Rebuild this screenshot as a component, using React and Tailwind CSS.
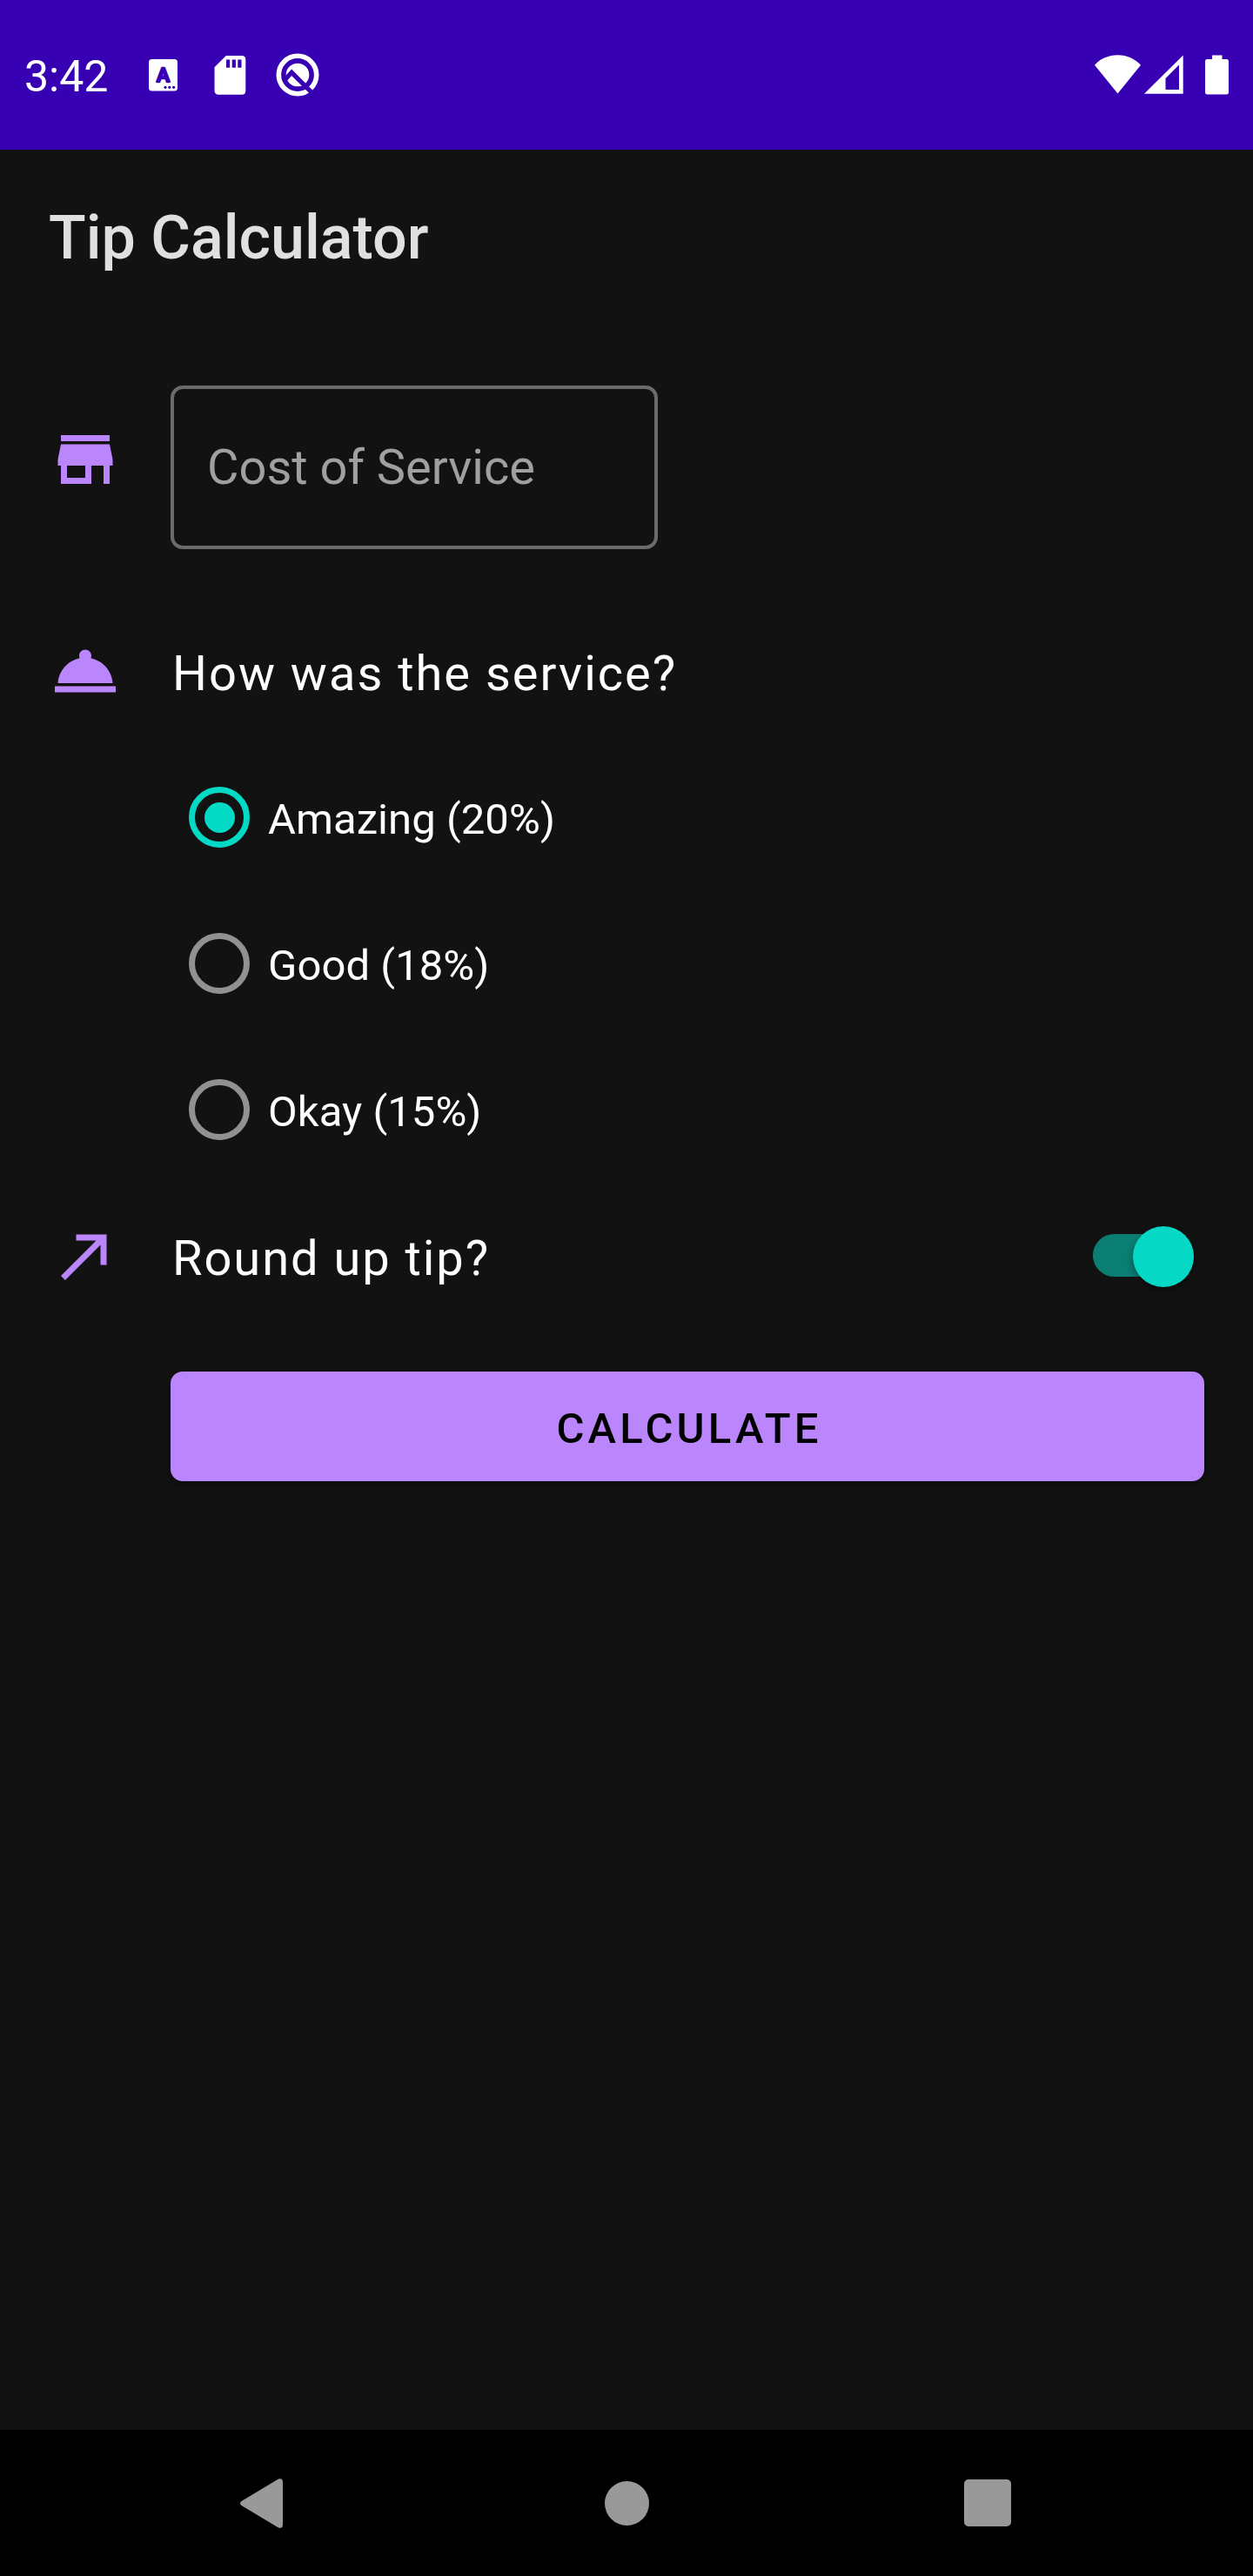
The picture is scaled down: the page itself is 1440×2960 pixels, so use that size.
import { useState } from "react";

const options = ["Amazing (20%)", "Good (18%)", "Okay (15%)"];

function StatusBar() {
  return (
    <header className="flex h-[172px] items-start justify-between bg-[#3700b3] px-7 text-white">
      <div className="flex items-start">
        <span className="mt-[60px] w-[143px] text-[50px] leading-[57px]">3:42</span>
        <svg className="mt-[68px] h-[37px] w-[33px]" viewBox="0 0 33 37">
          <rect width="33" height="36.5" rx="3.5" fill="currentColor" />
          <text x="16.5" y="26.2" textAnchor="middle" fontSize="22.5" fontWeight="500" fill="#3700b3" stroke="#3700b3" strokeWidth="2.4" strokeLinejoin="round">A</text>
          <g fill="#3700b3">
            <circle cx="19" cy="32.3" r="1.6" />
            <circle cx="23.8" cy="32.3" r="1.6" />
            <circle cx="28.6" cy="32.3" r="1.6" />
          </g>
        </svg>
        <svg className="ml-[42px] mt-[64px] h-[45px] w-[37px]" viewBox="0 0 37 45" fill="currentColor">
          <path fillRule="evenodd" d="M13.8 0H32a4.4 4.4 0 0 1 4.3 4.4v36a4.4 4.4 0 0 1-4.3 4.3H5A4.4 4.4 0 0 1 .5 40.4V13.3ZM14 4.5v9.2h4.2V4.5ZM20.7 4.5v9.2h4.2V4.5ZM27.3 4.5v9.2h4.2V4.5Z" />
        </svg>
        <svg className="ml-[34px] mt-[61px] h-[50px] w-[50px]" viewBox="0 0 50 50">
          <circle cx="25" cy="25" r="21.7" fill="none" stroke="currentColor" strokeWidth="5.6" />
          <circle cx="25" cy="25" r="13.3" fill="currentColor" />
          <path d="M11 30 18.200 22.300 45 49" fill="none" stroke="#3700b3" strokeWidth="5.200" />
        </svg>
      </div>
      <div className="mt-[63px] flex h-[46px] items-start">
        <svg className="h-[45px] w-[53px]" viewBox="0 0 53 45" fill="currentColor">
          <path d="M26.5 44.5 0 11.7C6.5 4.5 16 .2 26.5.2S46.5 4.5 53 11.7Z" />
        </svg>
        <svg className="ml-[4px] h-[45px] w-[45px]" viewBox="0 0 45 45" fill="currentColor">
          <path fillRule="evenodd" d="M0 44.7 44.7.5v44.2ZM40 11.5 24.5 27v13H40Z" />
        </svg>
        <svg className="ml-[25px] h-[46px] w-[27px]" viewBox="0 0 27 46" fill="currentColor">
          <path d="M8 .5h11.5V5H24.5A2.5 2.5 0 0 1 27 7.5V43a2.5 2.5 0 0 1-2.5 2.5h-22A2.5 2.5 0 0 1 0 43V7.5A2.5 2.5 0 0 1 2.5 5H8Z" />
        </svg>
      </div>
    </header>
  );
}

function RowIcon({ className = "", d }) {
  return (
    <svg className={`h-[84px] w-[84px] shrink-0 text-[#bb86fc] ${className}`} viewBox="0 0 24 24" fill="currentColor">
      <path d={d} />
    </svg>
  );
}

function Radio({ label, checked, onSelect }) {
  return (
    <button type="button" role="radio" aria-checked={checked} onClick={onSelect} className="flex h-[168px] items-center text-left">
      <span className={`flex size-[70px] items-center justify-center rounded-full border-7 ${checked ? "border-[#03dac5]" : "border-[#919191]"}`}>
        {checked && <span className="size-[35px] rounded-full bg-[#03dac5]" />}
      </span>
      <span className="ml-[21px] pt-[5px] text-[49px] leading-[58px] tracking-[0.05px] text-white">{label}</span>
    </button>
  );
}

export default function App() {
  const [selected, setSelected] = useState(0);
  const [roundUp, setRoundUp] = useState(true);

  return (
    <div className="flex h-[2960px] w-[1440px] flex-col overflow-hidden bg-[#121212] font-['Roboto',sans-serif]">
      <StatusBar />
      <h1 className="h-[271px] pl-14 pt-[60px] text-[70px] font-medium leading-[82px] text-[#e0e0e0]">Tip Calculator</h1>

      <main className="flex grow flex-col px-14">
        <div className="flex h-[188px]">
          <RowIcon className="mt-[43px]" d="M20 4H4v2h16V4zm1 10v-2l-1-5H4l-1 5v2h1v6h10v-6h4v6h2v-6h1zm-9 4H6v-4h6v4z" />
          <input
            aria-label="Cost of Service"
            placeholder="Cost of Service"
            className="ml-14 h-[188px] w-[560px] rounded-[14px] border-4 border-[#6b6b6b] px-[38px] text-[56px] text-white outline-none placeholder:text-[#a0a0a0]"
          />
        </div>

        <div className="mt-[98px] flex h-[126px]">
          <RowIcon d="M2 17h20v2H2zm11.84-9.21c.1-.24.16-.51.16-.79 0-1.1-.9-2-2-2s-2 .9-2 2c0 .28.06.55.16.79C6.25 8.6 3.27 11.93 3 16h18c-.27-4.07-3.25-7.4-7.16-8.21z" />
          <h2 className="ml-[58px] pt-[12px] text-[56px] leading-[66px] tracking-[2px] text-white">How was the service?</h2>
        </div>

        <div role="radiogroup" className="ml-[161px] flex h-[504px] flex-col">
          {options.map((label, i) => (
            <Radio key={label} label={label} checked={selected === i} onSelect={() => setSelected(i)} />
          ))}
        </div>

        <div className="mt-[41px] flex h-[176px]">
          <RowIcon className="mt-px" d="M9 5v2h6.590L4 18.590 5.410 20 17 8.410V15h2V5z" />
          <span className="ml-[58px] grow pt-[13px] text-[56px] leading-[66px] tracking-[1.95px] text-white">Round up tip?</span>
          <button
            type="button"
            role="switch"
            aria-checked={roundUp}
            onClick={() => setRoundUp(!roundUp)}
            className={`mr-3 mt-[18px] flex h-[49px] w-[116px] items-center rounded-full ${roundUp ? "justify-end bg-[#0a7e72]" : "bg-[#555]"}`}
          >
            <span className="mt-[2px] size-[70px] shrink-0 rounded-full bg-[#05d8c4] shadow-[0_4px_8px_rgba(0,0,0,0.35)]" />
          </button>
        </div>

        <button type="button" className="ml-[140px] h-[126px] rounded-[14px] bg-[#bb86fc] pl-[4px] pt-[5px] text-[49px] font-medium leading-[58px] tracking-[4.2px] text-black shadow-[0_5px_10px_rgba(0,0,0,0.3)]">
          CALCULATE
        </button>
      </main>

      <nav className="flex h-[168px] items-center justify-between bg-black pl-[276px] pr-[278px] text-[#999]">
        <svg className="h-[57px] w-[49px]" viewBox="0 0 49 57" fill="currentColor">
          <path d="M44 .6Q49-1 49 4V53Q49 58 44 56.4L1.5 31Q-1.500 28.500 1.500 26Z" />
        </svg>
        <span className="ml-[7px] size-[51px] rounded-full bg-current" />
        <span className="size-[54px] rounded-[5px] bg-current" />
      </nav>
    </div>
  );
}
